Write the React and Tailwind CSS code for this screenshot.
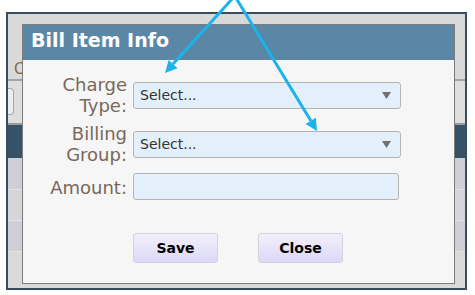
export default function App() {
  const labelFont = { fontFamily: '"DejaVu Sans", Verdana, sans-serif' };

  return (
    <div
      className="relative w-[475px] h-[295px] bg-white overflow-hidden pt-[12px] pl-[6px]"
      style={labelFont}
    >
      {/* Screenshot frame with the page behind the dialog */}
      <div className="relative w-[461px] h-[278px] border-2 border-[#3b4c5e] bg-[#d9d9d9] flex flex-col overflow-hidden">
        <div className="h-[69px] flex items-end pb-[2px] pl-[6px]">
          <span className="text-[15px] text-[#8a6a4a] leading-none">C</span>
        </div>
        <div className="h-[2px] border-t border-b border-[#a3a3a3] bg-[#e8e8e8]" />
        <div className="h-[45px] bg-[#dedede] flex items-center">
          <div className="w-[6px] h-[27px] border border-l-0 border-[#a8a8a8] rounded-r-[4px] bg-[#ececec]" />
        </div>
        <div className="h-[2px] bg-[#9a9a9a]" />
        <div className="h-[36px] bg-[#34526a]" />
        <div className="h-[34px] bg-[#cfd0d5] border-b border-[#e4e4e6]" />
        <div className="h-[33px] bg-[#d6d6da] border-b border-[#e4e4e6]" />
        <div className="h-[33px] bg-[#cfd0d5] border-b border-[#e4e4e6]" />
        <div className="flex-1 bg-[#dadada] pl-[237px] pt-[12px]">
          <span className="text-[13px] text-[#3d556e] leading-none">Unit time</span>
        </div>

        {/* Dialog */}
        <div className="absolute left-[14px] top-[10px] w-[433px] h-[260px] border border-[#7c7c7c] bg-[#f6f6f6] flex flex-col">
          <div className="h-[35px] bg-[#5b87a6] flex items-center pl-[8px] pb-[4px]">
            <span className="text-[19px] font-bold text-white">Bill Item Info</span>
          </div>

          <div className="flex flex-col pt-[14px]">
            <FormRow label={["Charge", "Type:"]}>
              <SelectBox />
            </FormRow>
            <div className="mt-[7px]">
              <FormRow label={["Billing", "Group:"]}>
                <SelectBox />
              </FormRow>
            </div>
            <div className="mt-[8px] flex items-center h-[27px]">
              <div className="w-[104px] text-right text-[18px] leading-[21px] text-[#78695b] pt-[1px]">
                Amount:
              </div>
              <input
                type="text"
                className="ml-[6px] w-[266px] h-[27px] bg-[#e3f0fb] border border-[#b4b4b4] rounded-[3px] outline-none"
              />
            </div>

            <div className="mt-[33px] ml-[110px] flex gap-[40px]">
              <Button>Save</Button>
              <Button>Close</Button>
            </div>
          </div>
        </div>
      </div>

      {/* Annotation arrows */}
      <svg
        className="absolute left-0 top-0 pointer-events-none"
        width="475"
        height="295"
        viewBox="0 0 475 295"
      >
        <line x1="233" y1="-2" x2="173" y2="64" stroke="#1ab2ef" strokeWidth="3" />
        <polygon points="165,73 177.5,68.3 168.7,60.1" fill="#1ab2ef" />
        <line x1="236" y1="-2" x2="311" y2="121" stroke="#1ab2ef" strokeWidth="3" />
        <polygon points="317,131 315.8,117.7 305.6,123.9" fill="#1ab2ef" />
      </svg>
    </div>
  );
}

function FormRow({ label, children }) {
  return (
    <div className="flex items-center h-[42px]">
      <div className="w-[104px] text-right text-[18px] leading-[21px] text-[#78695b]">
        {label.map((l) => (
          <div key={l}>{l}</div>
        ))}
      </div>
      <div className="ml-[6px]">{children}</div>
    </div>
  );
}

function SelectBox() {
  return (
    <div className="w-[268px] h-[27px] bg-[#e3f0fb] border border-[#b4b4b4] rounded-[3px] flex items-center justify-between pl-[6px] pr-[9px]">
      <span className="text-[14px] text-[#333333]">Select...</span>
      <svg width="9" height="7" viewBox="0 0 9 7">
        <polygon points="0,0 9,0 4.5,7" fill="#707070" />
      </svg>
    </div>
  );
}

function Button({ children }) {
  return (
    <button className="w-[85px] h-[30px] rounded-[3px] border border-[#d2d2dc] bg-gradient-to-b from-[#f2f0fc] to-[#dcd8f6] text-[14px] font-bold text-black">
      {children}
    </button>
  );
}
